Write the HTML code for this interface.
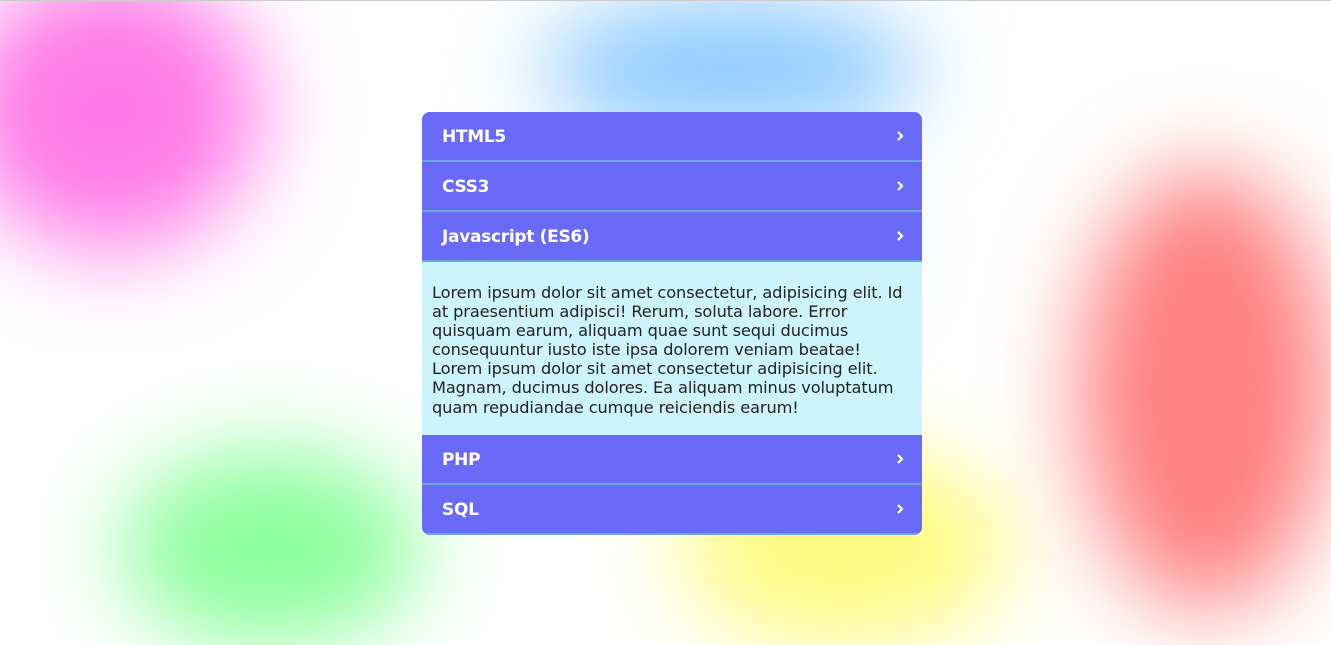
<!DOCTYPE html>
<html><head><style>
html,body{margin:0;padding:0;width:1331px;height:645px;overflow:hidden}
body{background:#fff;font-family:"DejaVu Sans",sans-serif;position:relative}
.wrap{position:absolute;left:0;top:0;width:1331px;height:645px;overflow:hidden}
.line{position:absolute;left:0;top:0;width:1331px;height:1px;background:#ccc}
.b{position:absolute;border-radius:50%;filter:blur(45px)}
.acc{position:absolute;left:422px;top:112px;width:500px;border-radius:8px;overflow:hidden;background:#6a6af8}
.h{height:48px;border-bottom:2px solid #6aa8d8;background:#6a6af8;color:#fff;font-weight:bold;font-size:17px;line-height:50px;padding-left:20px;position:relative;letter-spacing:-0.3px}
.h svg{position:absolute;right:18px;top:18px}
.c{background:#cdf4fc;color:#222;font-size:16.2px;line-height:19.1px;padding:21px 10px 17px;height:135px;white-space:nowrap;letter-spacing:-0.1px}
</style></head><body>
<div class="wrap">
<div class="b" style="left:0;top:0;width:300px;height:280px;background:#ff7ae8;transform:translate(-40px,-30px)"></div>
<div class="b" style="left:540px;top:0;width:380px;height:140px;background:#8ccaff"></div>
<div class="b" style="left:630px;top:140px;width:260px;height:200px;background:#b8dcff;opacity:.6"></div>
<div class="b" style="left:1080px;top:170px;width:251px;height:440px;background:#ff8080"></div>
<div class="b" style="left:120px;top:450px;width:300px;height:195px;background:#8cff9c"></div>
<div class="b" style="left:680px;top:450px;width:330px;height:195px;background:#fffa80"></div>
<div class="line"></div>
</div>
<div class="acc">
<div class="h">HTML5<svg width="8" height="12" viewBox="0 0 8 12"><path d="M2 2l4 4-4 4" stroke="#fff" stroke-width="2.2" fill="none"/></svg></div>
<div class="h">CSS3<svg width="8" height="12" viewBox="0 0 8 12"><path d="M2 2l4 4-4 4" stroke="#fff" stroke-width="2.2" fill="none"/></svg></div>
<div class="h">Javascript (ES6)<svg width="8" height="12" viewBox="0 0 8 12"><path d="M2 2l4 4-4 4" stroke="#fff" stroke-width="2.2" fill="none"/></svg></div>
<div class="c">Lorem ipsum dolor sit amet consectetur, adipisicing elit. Id<br>at praesentium adipisci! Rerum, soluta labore. Error<br>quisquam earum, aliquam quae sunt sequi ducimus<br>consequuntur iusto iste ipsa dolorem veniam beatae!<br>Lorem ipsum dolor sit amet consectetur adipisicing elit.<br>Magnam, ducimus dolores. Ea aliquam minus voluptatum<br>quam repudiandae cumque reiciendis earum!</div>
<div class="h">PHP<svg width="8" height="12" viewBox="0 0 8 12"><path d="M2 2l4 4-4 4" stroke="#fff" stroke-width="2.2" fill="none"/></svg></div>
<div class="h">SQL<svg width="8" height="12" viewBox="0 0 8 12"><path d="M2 2l4 4-4 4" stroke="#fff" stroke-width="2.2" fill="none"/></svg></div>
</div>
</body></html>
